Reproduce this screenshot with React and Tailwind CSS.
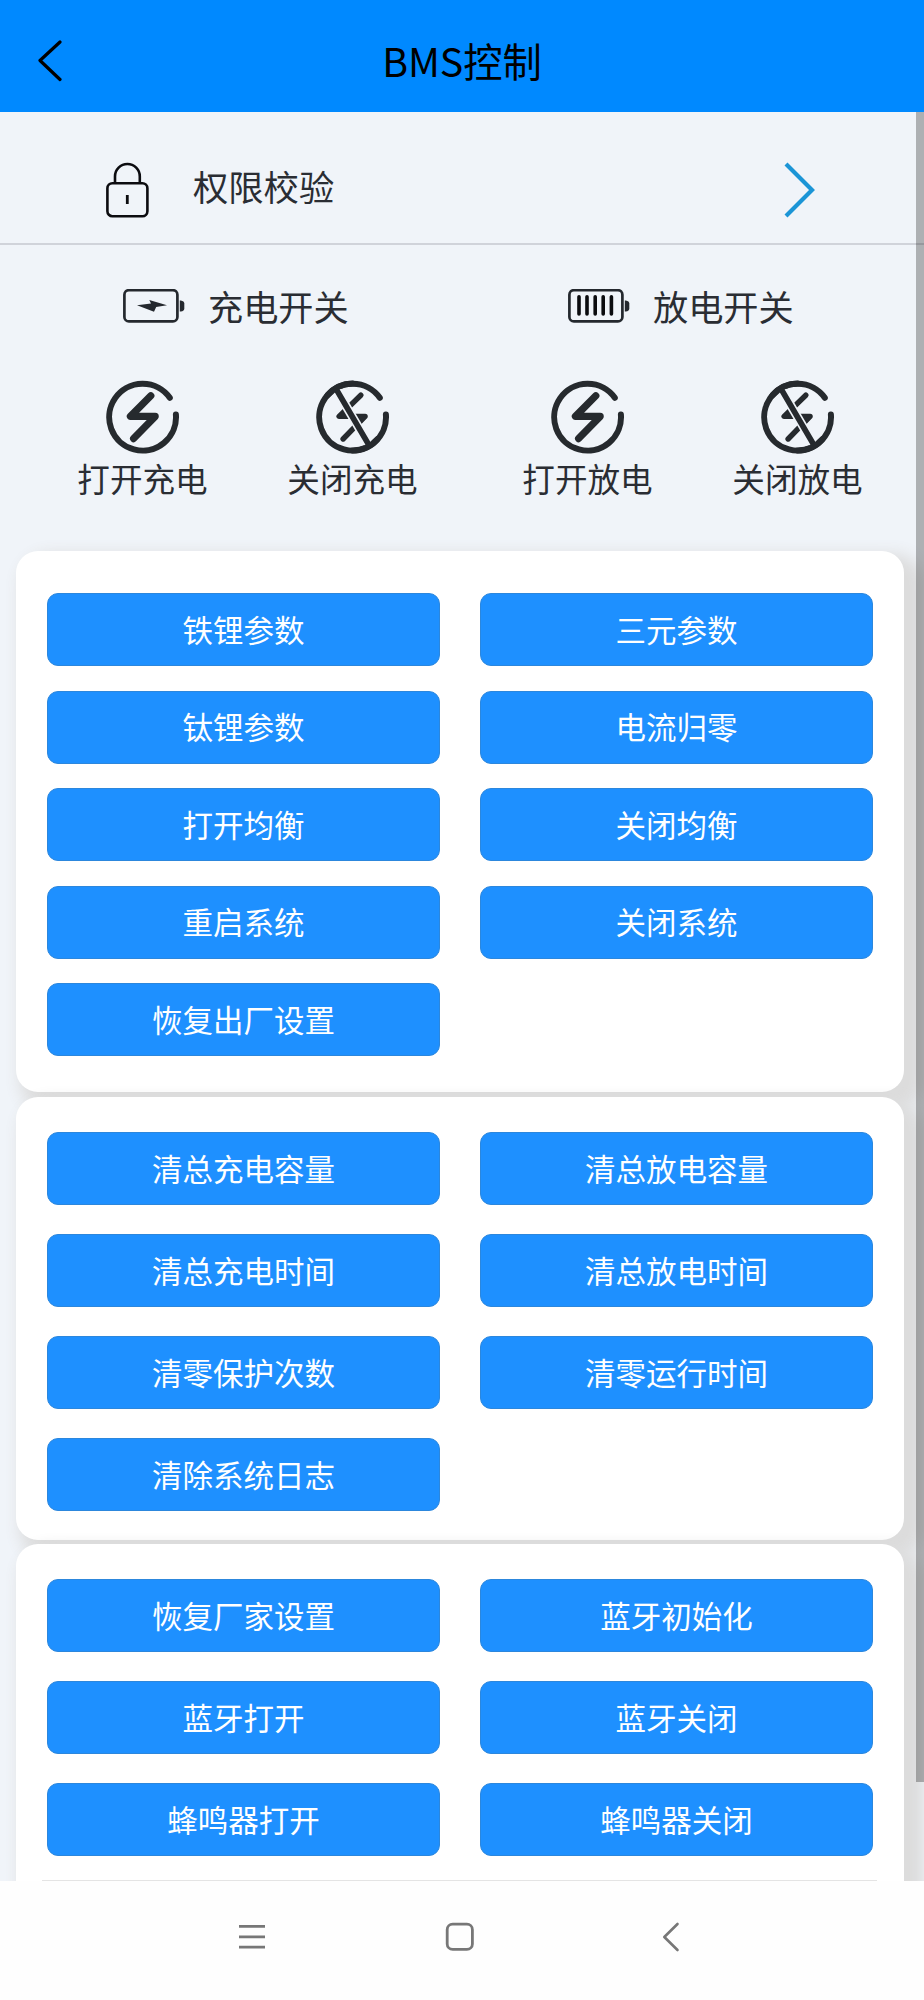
const basicActions = [
  "铁锂参数",
  "三元参数",
  "钛锂参数",
  "电流归零",
  "打开均衡",
  "关闭均衡",
  "重启系统",
  "关闭系统",
  "恢复出厂设置",
];

const clearActions = [
  "清总充电容量",
  "清总放电容量",
  "清总充电时间",
  "清总放电时间",
  "清零保护次数",
  "清零运行时间",
  "清除系统日志",
];

const deviceActions = [
  "恢复厂家设置",
  "蓝牙初始化",
  "蓝牙打开",
  "蓝牙关闭",
  "蜂鸣器打开",
  "蜂鸣器关闭",
];

function LockIcon() {
  return (
    <svg width="44" height="56" viewBox="0 0 44 56" fill="none" stroke="#0c0c10" strokeWidth="2.6">
      <rect x="2.4" y="21.2" width="40" height="33" rx="5" />
      <path d="M10 21.2V14.4a12.4 12.4 0 0 1 24.8 0v6.8" />
      <path d="M22.3 33v9" strokeWidth="2.8" />
    </svg>
  );
}

function BatteryIcon({ charging }) {
  return (
    <svg width="62" height="34" viewBox="0 0 62 34" fill="none">
      <rect x="1.4" y="1.2" width="53" height="31.2" rx="4.5" stroke="#24282e" strokeWidth="2.7" />
      <path d="M56.8 11.5h1q3.5.5 3.5 3v5q0 2.5-3.5 3h-1z" fill="#24282e" />
      {charging ? (
        <path d="M14 16.2 28 14.6 26.3 11 44 16.2 33.2 18 31 22.7z" fill="#24282e" />
      ) : (
        <path
          d="M11 7.8v17.2M19 7.8v17.2M27.2 7.8v17.2M35.2 7.8v17.2M43.4 7.8v17.2"
          stroke="#0b0c0f"
          strokeWidth="3.6"
          strokeLinecap="round"
        />
      )}
    </svg>
  );
}

function PowerIcon({ off }) {
  return (
    <svg
      width="74"
      height="74"
      viewBox="0.4 0 74 74"
      fill="none"
      stroke="#262a2e"
      strokeLinecap="round"
      strokeLinejoin="round"
    >
      <path d="M64.2 17.8A33.4 33.4 0 1 0 70.3 34.5" strokeWidth="6" />
      {off ? (
        <>
          <path d="M45.2 15.2 23.5 36.4H49.5L27.5 59" strokeWidth="5.4" />
          <path d="M24 36.4h5l-1-3.6zM43 36.6h6.5l-4 4z" fill="#262a2e" strokeWidth="4" />
          <path d="M20.5 9 53 64.5" stroke="#f0f4f9" strokeWidth="9" strokeLinecap="butt" />
          <path d="M20.5 9 53 64.5" strokeWidth="5.6" />
          <path d="M12 15.2A33.4 33.4 0 0 1 37 3.6M37 70.4A33.4 33.4 0 0 0 62 59" strokeWidth="6" />
        </>
      ) : (
        <path d="M45.2 15.8 24.8 36.4H49.6L28 58.6" strokeWidth="7.2" />
      )}
    </svg>
  );
}

function SwitchGroup({ title, charging, onLabel, offLabel }) {
  return (
    <div className="w-[445px]">
      <div className="flex h-[34px] items-center gap-[23px] pl-[98px]">
        <BatteryIcon charging={charging} />
        <span className="pb-px text-[35.2px] leading-none">{title}</span>
      </div>
      <div className="mx-auto mt-[57px] grid w-[420px] grid-cols-2 text-[32.6px] leading-none">
        <div className="flex flex-col items-center gap-2">
          <PowerIcon />
          <span>{onLabel}</span>
        </div>
        <div className="flex flex-col items-center gap-2">
          <PowerIcon off />
          <span>{offLabel}</span>
        </div>
      </div>
    </div>
  );
}

function ActionCard({ actions, className }) {
  return (
    <section
      className={`ml-4 grid w-[888px] shrink-0 grid-cols-[393px_393px] gap-x-10 rounded-[22px] bg-white pl-[31px] shadow-[12px_11px_16px_8px_#dcdcdc] ${className}`}
    >
      {actions.map((label) => (
        <button
          key={label}
          className="h-[73px] rounded-[11px] border border-[#2c87dd] bg-[#1e90ff] pb-px text-[30.5px] leading-none text-white"
        >
          {label}
        </button>
      ))}
    </section>
  );
}

export default function App() {
  return (
    <div className="flex h-[2000px] w-[924px] flex-col overflow-hidden bg-[#f0f4f9] font-['Noto_Sans_CJK_SC',sans-serif] text-[#2a2d33]">
      {/* Title bar */}
      <header className="grid h-[112px] shrink-0 grid-cols-[1fr_auto_1fr] items-center bg-[#0089ff] pt-[10px] text-black">
        <svg className="ml-[37px]" width="25" height="42" viewBox="0 0 25 42" fill="none" stroke="currentColor" strokeWidth="3.2" strokeLinecap="round" strokeLinejoin="round">
          <path d="M23 2 3 20.5 23 39.5" />
        </svg>
        <h1 className="pb-[2px] text-[39.3px] leading-none">BMS控制</h1>
      </header>

      <main className="relative flex h-[1769px] shrink-0 flex-col overflow-hidden">
        {/* Permission check */}
        <div className="flex h-[133px] shrink-0 items-center border-b-2 border-[#d0d3da] pr-[109px] pl-[105px] pt-6">
          <LockIcon />
          <span className="ml-[44px] pb-[7px] text-[35.3px] leading-none">权限校验</span>
          <svg className="ml-auto" width="31" height="56" viewBox="0 0 31 56" fill="none" stroke="#1b95d6" strokeWidth="4.2">
            <path d="M2 2 28 28 2 54" />
          </svg>
        </div>

        {/* Charge / discharge switches */}
        <div className="flex h-[306px] shrink-0 pt-[44px] pl-[25px]">
          <SwitchGroup title="充电开关" charging onLabel="打开充电" offLabel="关闭充电" />
          <SwitchGroup title="放电开关" onLabel="打开放电" offLabel="关闭放电" />
        </div>

        <ActionCard actions={basicActions} className="h-[541px] content-start gap-y-[24.5px] pt-[42px]" />
        <ActionCard actions={clearActions} className="mt-[5px] h-[443px] content-start gap-y-[29px] pt-[35px]" />
        <ActionCard actions={deviceActions} className="mt-1 h-[480px] content-start gap-y-[29px] pt-[35px]" />

        {/* Scrollbar thumb */}
        <div className="absolute top-0 right-0 h-[1670px] w-2 bg-black/28" />
        <div className="absolute bottom-0 left-[42px] h-px w-[835px] bg-[#e4e4e4]" />
      </main>

      {/* System navigation */}
      <nav className="flex grow items-start bg-[#fefefe] pt-[41px] pl-[238px] text-[#777777]">
        <svg width="28" height="30" viewBox="0 0 28 30" stroke="currentColor" strokeWidth="2.8">
          <path d="M1 4.3h26M1 14.8h26M1 25.2h26" />
        </svg>
        <svg className="ml-[179px]" width="30" height="30" viewBox="0 0 30 30" fill="none" stroke="currentColor" strokeWidth="2.8">
          <rect x="2.2" y="2.2" width="25.2" height="25.2" rx="5.5" />
        </svg>
        <svg className="ml-[187px]" width="18" height="30" viewBox="0 0 18 30" fill="none" stroke="currentColor" strokeWidth="2.6" strokeLinecap="round" strokeLinejoin="round">
          <path d="M15.5 2 2.3 15 15.5 28" />
        </svg>
      </nav>
    </div>
  );
}
